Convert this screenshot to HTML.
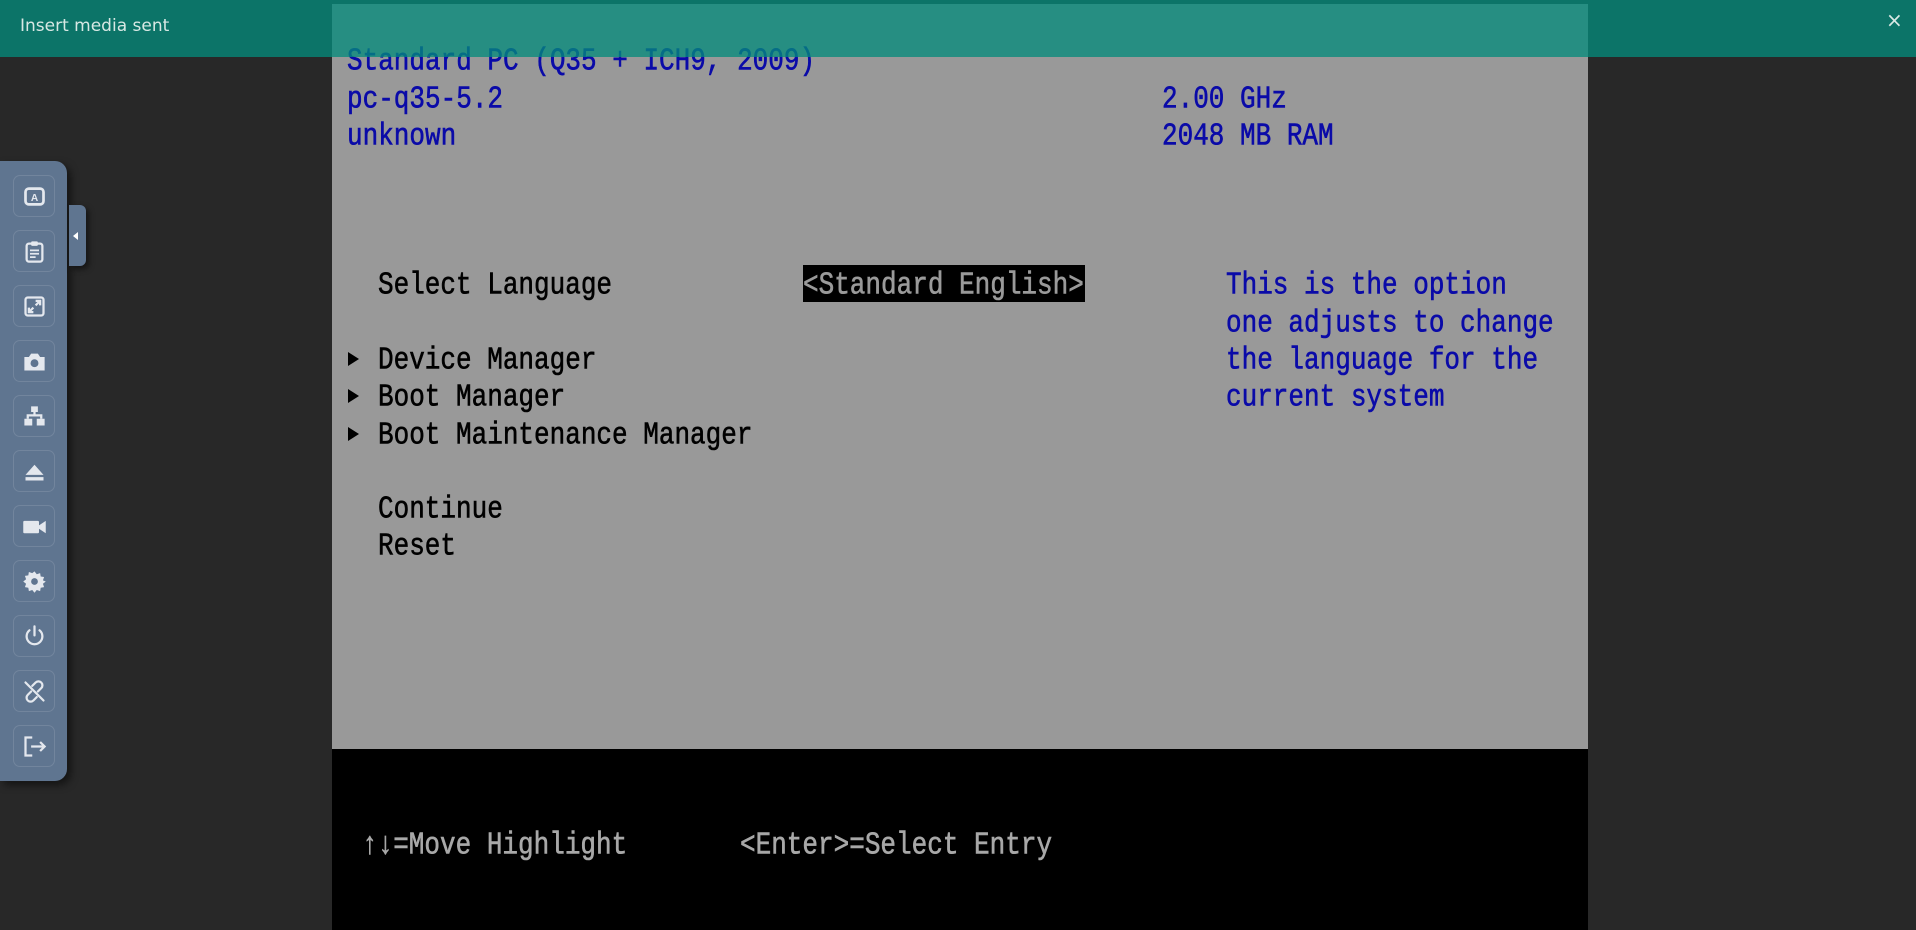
<!DOCTYPE html>
<html><head><meta charset="utf-8"><style>
*{margin:0;padding:0;box-sizing:border-box}
body{width:1916px;height:930px;background:#282828;position:relative;overflow:hidden;font-family:"Liberation Sans",sans-serif}
#scr{position:absolute;left:332px;top:4px;width:1256px;height:926px;background:#000}
#gray{position:absolute;left:0;top:0;width:1256px;height:745px;background:#999}
.t{position:absolute;font-family:"Liberation Mono","DejaVu Sans Mono",monospace;font-size:26px;line-height:37px;white-space:pre;transform:scaleY(1.2);transform-origin:left center;-webkit-text-stroke:0.5px currentColor;margin-top:2px}
.b{color:#0a0aa8}.k{color:#000}.w{color:#a8a8a8}
#sel{position:absolute;left:471px;top:261px;width:282px;height:37px;background:#000}
.tri{position:absolute;left:16px;width:0;height:0;border-top:7px solid transparent;border-bottom:7px solid transparent;border-left:11px solid #000}
#toast{position:absolute;left:0;top:0;width:1916px;height:57px;background:rgba(4,139,123,0.77);color:#d8e8e4;font-size:17px;font-family:"DejaVu Sans",sans-serif}
#side{position:absolute;left:0;top:161px;width:67px;height:620px;background:#5f7590;border-radius:0 12px 12px 0;box-shadow:4px 4px 8px rgba(0,0,0,.5)}
.btn{position:absolute;left:13px;width:42px;height:42px;border:1px solid rgba(255,255,255,.12);border-radius:7px;display:flex;align-items:center;justify-content:center}
.btn svg{width:27px;height:27px}
#handle{position:absolute;left:69px;top:205px;width:17px;height:61px;background:#5f7590;border-radius:0 6px 6px 0;box-shadow:3px 3px 6px rgba(0,0,0,.5)}
</style></head><body>
<div id="scr">
<div id="gray">
<div class="t b" style="left:15px;top:37px">Standard PC (Q35 + ICH9, 2009)</div>
<div class="t b" style="left:15px;top:75px">pc-q35-5.2</div>
<div class="t b" style="left:15px;top:112px">unknown</div>
<div class="t b" style="left:830px;top:75px">2.00 GHz</div>
<div class="t b" style="left:830px;top:112px">2048 MB RAM</div>
<div class="t k" style="left:46px;top:261px">Select Language</div>
<div id="sel"></div>
<div class="t" style="left:471px;top:261px;color:#9a9a9a">&lt;Standard English&gt;</div>
<div class="t b" style="left:894px;top:261px">This is the option</div>
<div class="t b" style="left:894px;top:299px">one adjusts to change</div>
<div class="t b" style="left:894px;top:336px">the language for the</div>
<div class="t b" style="left:894px;top:373px">current system</div>
<div class="tri" style="top:348px"></div>
<div class="tri" style="top:385px"></div>
<div class="tri" style="top:423px"></div>
<div class="t k" style="left:46px;top:336px">Device Manager</div>
<div class="t k" style="left:46px;top:373px">Boot Manager</div>
<div class="t k" style="left:46px;top:411px">Boot Maintenance Manager</div>
<div class="t k" style="left:46px;top:485px">Continue</div>
<div class="t k" style="left:46px;top:522px">Reset</div>
</div>
<div class="t w" style="left:30px;top:821px">↑↓=Move Highlight</div>
<div class="t w" style="left:408px;top:821px">&lt;Enter&gt;=Select Entry</div>
</div>
<div id="toast"><span style="position:absolute;left:20px;top:16px">Insert media sent</span><span style="position:absolute;left:1886px;top:8px;font-size:20px">×</span></div>
<div id="side">
<div class="btn" style="top:14px"><svg viewBox="0 0 24 24"><rect x="4" y="5" width="16" height="14" rx="3" fill="none" stroke="#e4e8ee" stroke-width="2.4"/><text x="12" y="16" font-size="9" text-anchor="middle" fill="#e4e8ee" font-family="Liberation Sans" font-weight="bold">A</text></svg></div>
<div class="btn" style="top:69px"><svg viewBox="0 0 24 24"><rect x="5" y="5" width="14" height="16" rx="2" fill="none" stroke="#e4e8ee" stroke-width="2"/><rect x="9" y="3" width="6" height="4" rx="1" fill="#e4e8ee"/><path d="M8 11h8M8 14h8M8 17h5" stroke="#e4e8ee" stroke-width="1.5"/></svg></div>
<div class="btn" style="top:124px"><svg viewBox="0 0 24 24"><rect x="4" y="4" width="16" height="16" rx="2" fill="none" stroke="#e4e8ee" stroke-width="2"/><path d="M13 7h4v4M17 7l-4 4M11 17H7v-4M7 17l4-4" stroke="#e4e8ee" stroke-width="2" fill="none"/></svg></div>
<div class="btn" style="top:179px"><svg viewBox="0 0 24 24"><path d="M3 8h4l2-3h6l2 3h4v12H3z" fill="#e4e8ee"/><circle cx="12" cy="13.5" r="3.5" fill="#5f7590"/></svg></div>
<div class="btn" style="top:234px"><svg viewBox="0 0 24 24"><rect x="9" y="3" width="6" height="5" fill="#e4e8ee"/><path d="M12 8v3M6 14v-3h12v3" stroke="#e4e8ee" stroke-width="2" fill="none"/><rect x="3" y="14" width="7" height="6" fill="#e4e8ee"/><rect x="14" y="14" width="7" height="6" fill="#e4e8ee"/></svg></div>
<div class="btn" style="top:289px"><svg viewBox="0 0 24 24"><path d="M12 6l8 9H4z" fill="#e4e8ee"/><rect x="4" y="17" width="16" height="3" fill="#e4e8ee"/></svg></div>
<div class="btn" style="top:344px"><svg viewBox="0 0 24 24"><rect x="2" y="7" width="14" height="11" rx="1" fill="#e4e8ee"/><path d="M16 11l6-4v11l-6-4z" fill="#e4e8ee"/></svg></div>
<div class="btn" style="top:399px"><svg viewBox="0 0 24 24"><path d="M12 3l2 2.5 3-1 .5 3 3 .5-1 3L22 12l-2.5 2 1 3-3 .5-.5 3-3-1L12 22l-2-2.5-3 1-.5-3-3-.5 1-3L2 12l2.5-2-1-3 3-.5.5-3 3 1z" fill="#e4e8ee"/><circle cx="12" cy="12" r="3" fill="#5f7590"/></svg></div>
<div class="btn" style="top:454px"><svg viewBox="0 0 24 24"><path d="M12 3v8M7.5 6.5a7 7 0 1 0 9 0" stroke="#e4e8ee" stroke-width="2" fill="none" stroke-linecap="round"/></svg></div>
<div class="btn" style="top:509px"><svg viewBox="0 0 24 24"><path d="M10 7l3-3a3 3 0 0 1 5 5l-3 3M14 17l-3 3a3 3 0 0 1-5-5l3-3M4 4l16 16" stroke="#e4e8ee" stroke-width="2" fill="none" stroke-linecap="round"/></svg></div>
<div class="btn" style="top:564px"><svg viewBox="0 0 24 24"><path d="M10 4H4v16h6M9 12h12M17 8l4 4-4 4" stroke="#e4e8ee" stroke-width="2" fill="none"/></svg></div>
</div>
<div id="handle"><div style="position:absolute;left:4px;top:27px;width:0;height:0;border-top:4px solid transparent;border-bottom:4px solid transparent;border-right:5px solid #fff"></div></div>
</body></html>
